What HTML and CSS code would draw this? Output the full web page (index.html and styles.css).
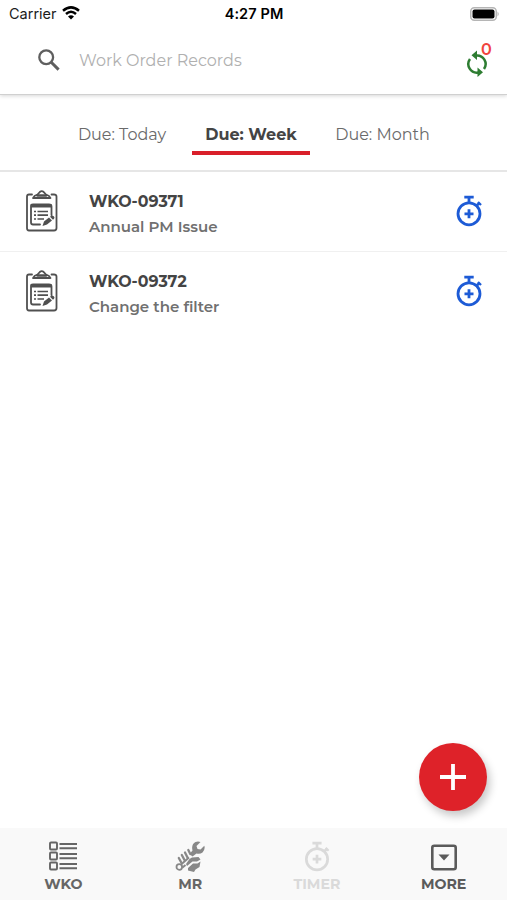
FILE: index.html
```
<!DOCTYPE html>
<html lang="en">
<head>
    <meta charset="UTF-8">
    <meta name="viewport" content="width=device-width, initial-scale=1.0">
    <title>Work Orders</title>
    <link rel="stylesheet" href="styles.css">
</head>
<body>
    <svg class="defs" width="0" height="0">
        <symbol id="clipboard" viewBox="0 0 32 42">
            <g fill="none" stroke="#505050" stroke-width="1.8" stroke-linecap="round" stroke-linejoin="round">
                <path d="M6 4.500H3Q1 4.500 1 6.500V38Q1 40.500 3 40.500H28Q30.500 40.500 30.500 38V6.500Q30.500 4.500 28 4.500H25.500"/>
                <path d="M7 8Q8 5.500 11.500 4.500L14 1.800Q15.700 0.500 17.500 1.800L20 4.500Q23.500 5.500 24.500 8Z"/>
                <path d="M11.500 5.500H20" stroke-width="2.600"/>
                <path d="M14 34.500H7Q5 34.500 5 32.500V16Q5 14.500 7 14.500H23Q25.500 14.500 25.500 16.500V25"/>
            </g>
            <path d="M5 14H25.500V17.500H5Z" fill="#505050"/>
            <path d="M8 21.500h2M8 25.200h2M8 29h2M11.500 21.500H22M11.500 25.200H22M11.500 29H18" stroke="#505050" stroke-width="1.700"/>
            <path d="M16.500 36L18 31.500L23 27.500L26 30.500L21 34.500ZM24 26.800L25.500 25.500Q26.500 25 28 26.500Q29 28 28 28.700L27 29.800Z" fill="#505050"/>
        </symbol>
        <symbol id="stopwatch" viewBox="0 0 26 32">
            <g fill="none" stroke="currentColor">
                <circle cx="13" cy="18.800" r="11" stroke-width="2.800"/>
                <path d="M8.300 2.200H17.700M13 2.200V8M20 11L23.600 8" stroke-width="2.800"/>
                <path d="M22 6.900L25 10" stroke-width="2.200"/>
                <path d="M8.500 18.800H17.500M13 14.300V23.300" stroke-width="2.800"/>
            </g>
        </symbol>
    </svg>

    <div class="screen">
        <header class="header">
            <div class="status">
                <div class="carrier">
                    <span>Carrier</span>
                    <svg width="18" height="14" viewBox="0 0 18 14" fill="none" stroke="#000" stroke-width="2.500">
                        <path d="M1 4.800Q9 -2 17 4.800"/>
                        <path d="M4 8Q9 3.600 14 8"/>
                        <path d="M9 13.500L6 10.500Q9 8.200 12 10.500Z" fill="#000" stroke="none"/>
                    </svg>
                </div>
                <span class="time">4:27 PM</span>
                <svg class="battery" width="30" height="14" viewBox="0 0 30 14">
                    <rect x="0.750" y="0.750" width="25.500" height="12.500" rx="3.500" fill="#fff" stroke="#b5b5b5" stroke-width="1.500"/>
                    <rect x="2.500" y="2.500" width="22" height="9" rx="2" fill="#000"/>
                    <path d="M27.500 4.500Q30 7 27.500 9.500Z" fill="#b5b5b5"/>
                </svg>
            </div>
            <div class="search">
                <svg width="22" height="22" viewBox="0 0 22 22" fill="none" stroke="#5f5f5f">
                    <circle cx="8.200" cy="8.200" r="6.900" stroke-width="2.300"/>
                    <path d="M13 13L20.600 20.600" stroke-width="3"/>
                </svg>
                <span class="placeholder">Work Order Records</span>
                <div class="sync">
                    <svg width="22" height="28" viewBox="0 0 22 28" fill="none" stroke="#2e7d32" stroke-width="2.500">
                        <path d="M10 5.500A8.600 8.600 0 0 1 18 19"/>
                        <path d="M4 9A8.600 8.600 0 0 0 12.500 22.500"/>
                        <path d="M11 0.500V10L5.500 5.200ZM11.500 17.500V27L17 22.300Z" fill="#2e7d32" stroke="none"/>
                    </svg>
                    <span class="badge">0</span>
                </div>
            </div>
        </header>

        <nav class="tabs">
            <span class="tab">Due: Today</span>
            <span class="tab active">Due: Week</span>
            <span class="tab month">Due: Month</span>
        </nav>

        <main class="list">
            <div class="row">
                <svg class="clip"><use href="#clipboard"/></svg>
                <div class="info">
                    <div class="number">WKO-09371</div>
                    <div class="desc">Annual PM Issue</div>
                </div>
                <svg class="watch"><use href="#stopwatch"/></svg>
            </div>
            <div class="row">
                <svg class="clip"><use href="#clipboard"/></svg>
                <div class="info">
                    <div class="number">WKO-09372</div>
                    <div class="desc">Change the filter</div>
                </div>
                <svg class="watch"><use href="#stopwatch"/></svg>
            </div>
        </main>

        <div class="fab">
            <svg width="26" height="26" viewBox="0 0 26 26" stroke="#fff" stroke-width="3.800">
                <path d="M0 13H26M13 0V26"/>
            </svg>
        </div>

        <footer class="bottom">
            <div class="item">
                <svg width="28" height="30" viewBox="0 0 28 30" fill="none" stroke="#666">
                    <rect x="1" y="1.500" width="7" height="7" rx="1" stroke-width="1.900"/>
                    <rect x="1" y="11.500" width="7" height="7" rx="1" stroke-width="1.900"/>
                    <rect x="1" y="21.500" width="7" height="7" rx="1" stroke-width="1.900"/>
                    <path d="M10.500 3H28M10.500 7.300H28M10.500 13H28M10.500 17.300H28M10.500 23H28M10.500 27.300H28" stroke-width="1.900"/>
                </svg>
                <span>WKO</span>
            </div>
            <div class="item">
                <svg width="30" height="31" viewBox="0 0 30 31" fill="#888">
                    <!-- wrench head -->
                    <path d="M14.500 13L17.500 9.500Q16 3.500 20.500 1Q23 0 25.500 1L21.500 5L22.500 8L25.500 8.500L29.300 4.800Q30.500 8.500 27.500 11.500Q25 13.500 21.500 12.500L17.500 15.500Z"/>
                    <!-- fist -->
                    <path d="M14.500 18L17 16.500L23.500 16L25.500 18.500L22 20.500H17.500L12 25L11 23Z"/>
                    <path d="M13 27L18 22.500H22.500L25.500 20.500L24.500 26L20.500 28.500L19 31L13 29.500Z"/>
                    <!-- fingers -->
                    <path d="M3.800 17L6 21M6.800 14L9.500 19M10 11.500L12.500 16.500M13.300 9L15.300 13" stroke="#888" stroke-width="2.300" stroke-linecap="round"/>
                    <path d="M6 23.500L14 16.500M7.500 26.500L10.500 24" stroke="#888" stroke-width="2"/>
                    <circle cx="4.300" cy="26" r="2.800" fill="none" stroke="#888" stroke-width="1.800"/>
                </svg>
                <span>MR</span>
            </div>
            <div class="item disabled">
                <svg width="26" height="31"><use href="#stopwatch"/></svg>
                <span>TIMER</span>
            </div>
            <div class="item more">
                <svg width="26" height="27" viewBox="0 0 26 27">
                    <rect x="1.300" y="1.800" width="23.400" height="23.400" rx="2" fill="none" stroke="#5b5b5b" stroke-width="2.600"/>
                    <path d="M7.500 10.500H18.500L13 16.500Z" fill="#5b5b5b"/>
                </svg>
                <span>MORE</span>
            </div>
        </footer>
    </div>
</body>
</html>
```
FILE: styles.css
```
body{
    margin: 0;
    background-color: #fff;
    font-family: Montserrat, Inter, "Liberation Sans", sans-serif;
    color: #444;
}
.defs{
    display: block;
    height: 0;
}
.screen{
    display: flex;
    flex-direction: column;
    height: 900px;
    position: relative;
}
.header{
    height: 95px;
    box-sizing: border-box;
    border-bottom: 1px solid #d0d0d0;
    box-shadow: 0 1px 4px rgba(0,0,0,0.16);
}
.status{
    display: grid;
    grid-template-columns: 1fr auto 1fr;
    align-items: center;
    height: 27px;
    padding: 0 7px 0 9px;
    font-family: Inter, sans-serif;
    font-size: 14.5px;
    color: #1c1c1c;
}
.carrier{
    display: flex;
    align-items: center;
    gap: 5px;
}
.carrier svg{
    margin-bottom: 2px;
}
.time{
    margin-right: 1px;
    font-weight: 600;
    letter-spacing: 0.1px;
    color: #000;
}
.battery{
    justify-self: end;
}
.search{
    display: flex;
    align-items: center;
    height: 66px;
    padding: 0 15px 0 38px;
}
.placeholder{
    flex: 1;
    margin-left: 19px;
    font-size: 16px;
    font-weight: 400;
    color: #b0b0b0;
}
.sync{
    position: relative;
    width: 26px;
    height: 28px;
    margin-top: 8px;
}
.badge{
    position: absolute;
    left: 15px;
    top: -9px;
    font-size: 16px;
    font-weight: 600;
    line-height: 18px;
    color: #f0443e;
}
.tabs{
    display: flex;
    height: 75px;
    padding-left: 52px;
    border-bottom: 2px solid #e6e6e6;
}
.tab{
    flex: none;
    box-sizing: border-box;
    width: 140px;
    height: 60px;
    padding-top: 30px;
    font-size: 16px;
    line-height: 20px;
    text-align: center;
    color: #6a6a6a;
}
.tab.active{
    width: 118px;
    border-bottom: 4px solid #d91f2a;
    font-weight: 700;
    color: #444;
}
.month{
    width: 145px;
}
.list{
    flex: 1;
}
.row{
    display: flex;
    align-items: center;
    box-sizing: border-box;
    height: 79.500px;
    padding: 0 25px 0 26px;
    border-bottom: 1px solid #f0f0f0;
}
.row:last-child{
    border-bottom-color: #fff;
}
.clip{
    width: 32px;
    height: 42px;
}
.info{
    flex: 1;
    padding: 6px 0 0 31px;
    line-height: 25px;
}
.number{
    font-size: 15.800px;
    font-weight: 700;
    color: #444;
}
.desc{
    font-size: 15px;
    font-weight: 600;
    color: #707070;
}
.watch{
    width: 26px;
    height: 32px;
    color: #1d5bd6;
}
.fab{
    position: absolute;
    right: 20px;
    bottom: 89px;
    display: flex;
    align-items: center;
    justify-content: center;
    width: 68px;
    height: 68px;
    border-radius: 50%;
    background-color: #de2229;
    box-shadow: 3px 5px 8px rgba(0,0,0,0.22);
}
.bottom{
    display: grid;
    grid-template-columns: repeat(4, 1fr);
    height: 72px;
    background-color: #f9f9f9;
}
.item{
    display: flex;
    flex-direction: column;
    align-items: center;
    justify-content: space-between;
    box-sizing: border-box;
    padding: 13px 0 7px;
    font-size: 14.200px;
    font-weight: 700;
    line-height: 18px;
    color: #666;
}
.more{
    padding-top: 16px;
    color: #5b5b5b;
}
.disabled{
    color: #dadada;
}
```
